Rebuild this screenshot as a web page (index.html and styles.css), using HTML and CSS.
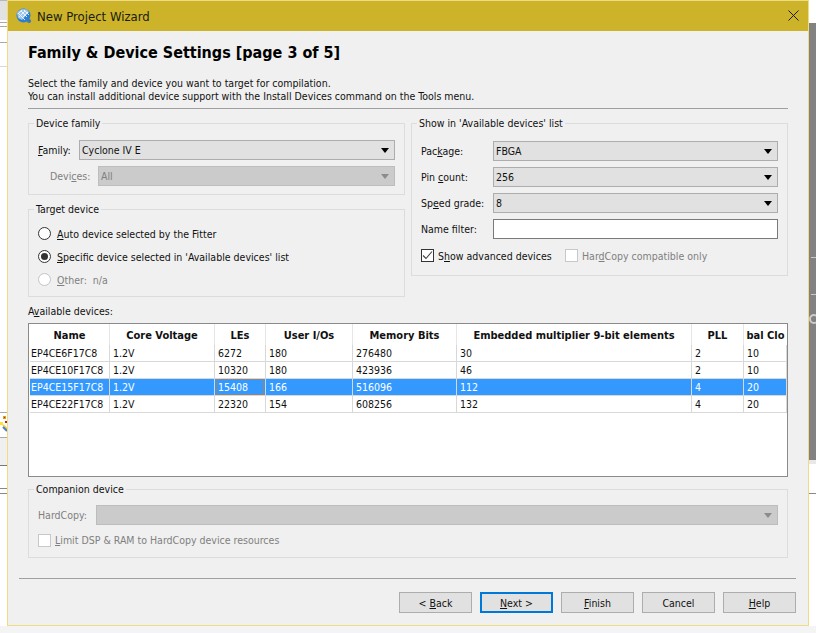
FILE: index.html
```html
<!DOCTYPE html>
<html lang="en">
<head>
<meta charset="utf-8">
<title>New Project Wizard</title>
<link rel="stylesheet" href="styles.css">
</head>
<body>
<div class="desktop">
  <div class="bg-left">
    <i class="s s1"></i><i class="s s2"></i><i class="s s3"></i><i class="s s4"></i><i class="s s5"></i><i class="s s6"></i><i class="s s7"></i><i class="s s8"></i>
    <svg class="wand" width="7" height="18" viewBox="0 0 7 18"><rect x="3" y="1" width="3" height="3" fill="#d9a020"/><rect x="4" y="2" width="1" height="1" fill="#c02020"/><rect x="0" y="7" width="3" height="3" fill="#ffe040"/><path d="M3 10l4 4" stroke="#f0d040" stroke-width="2"/><path d="M3 12l4 4" stroke="#4a7fd0" stroke-width="2"/><rect x="5" y="6" width="2" height="2" fill="#c02020"/></svg>
  </div>
  <div class="bg-right">
    <div class="gray"><span class="g1"></span><span class="g2"></span><span class="g3"></span></div>
    <i class="r1"></i>
  </div>
  <div class="window">
    <div class="titlebar">
      <svg class="appicon" width="16" height="16" viewBox="0 0 16 16"><circle cx="7.500" cy="7.500" r="7" fill="#2f7fd0"/><path d="M1 5C3 1.500 7 0 11 1.500L13 4 6 12 2 10z" fill="#9cc6ee"/><path d="M5 3l6 6M3 6l6 6M8 2l5 5M9 3l-6 6M12 4l-6 6M6 2L2 6" stroke="#f0f6fc" stroke-width=".9"/><circle cx="13" cy="13" r="2" fill="#3a78b8"/></svg>
      <span class="title">New Project Wizard</span>
      <svg class="close" width="11" height="11" viewBox="0 0 11 11"><path d="M.5.500l10 10M10.500.500l-10 10" stroke="#1a1a1a" stroke-width="1"/></svg>
    </div>
    <div class="body">
      <h1>Family &amp; Device Settings [page 3 of 5]</h1>
      <p class="desc">Select the family and device you want to target for compilation.<br>You can install additional device support with the Install Devices command on the Tools menu.</p>
      <hr class="rule">
      <div class="groups">
        <div class="col">
          <fieldset class="fs fs-family">
            <legend>Device family</legend>
            <div class="row"><label class="lbl-family"><u>F</u>amily:</label><div class="combo"><span>Cyclone IV E</span><b class="arrow"></b></div></div>
            <div class="row row-dev"><label class="lbl-dev dim">Devi<u>c</u>es:</label><div class="combo off"><span>All</span><b class="arrow"></b></div></div>
          </fieldset>
          <fieldset class="fs fs-target">
            <legend>Target device</legend>
            <div class="radio-row"><i class="radio"></i><span><u>A</u>uto device selected by the Fitter</span></div>
            <div class="radio-row"><i class="radio on"></i><span><u>S</u>pecific device selected in 'Available devices' list</span></div>
            <div class="radio-row dim"><i class="radio off"></i><span><u>O</u>ther:&nbsp; n/a</span></div>
          </fieldset>
        </div>
        <fieldset class="fs fs-show">
          <legend>Show in 'Available devices' list</legend>
          <div class="row"><label class="lbl-show">Pac<u>k</u>age:</label><div class="combo"><span>FBGA</span><b class="arrow"></b></div></div>
          <div class="row"><label class="lbl-show">Pin <u>c</u>ount:</label><div class="combo"><span>256</span><b class="arrow"></b></div></div>
          <div class="row"><label class="lbl-show">Sp<u>e</u>ed grade:</label><div class="combo"><span>8</span><b class="arrow"></b></div></div>
          <div class="row"><label class="lbl-show">Name filter:</label><div class="input"></div></div>
          <div class="checks">
            <i class="check"><svg width="11" height="11" viewBox="0 0 11 11"><path d="M1 5.500l3 3 6-7" fill="none" stroke="#444" stroke-width="1.100"/></svg></i><span class="c1">S<u>h</u>ow advanced devices</span>
            <i class="check off"></i><span class="dim">Har<u>d</u>Copy compatible only</span>
          </div>
        </fieldset>
      </div>
      <div class="avail">A<u>v</u>ailable devices:</div>
      <div class="tablebox">
        <table>
          <colgroup><col class="c-name"><col class="c-core"><col class="c-les"><col class="c-io"><col class="c-mem"><col class="c-emb"><col class="c-pll"><col class="c-clk"></colgroup>
          <thead><tr><th>Name</th><th>Core Voltage</th><th>LEs</th><th>User I/Os</th><th>Memory Bits</th><th>Embedded multiplier 9-bit elements</th><th>PLL</th><th class="clip">bal Clo</th></tr></thead>
          <tbody>
            <tr><td>EP4CE6F17C8</td><td>1.2V</td><td>6272</td><td>180</td><td>276480</td><td>30</td><td>2</td><td>10</td></tr>
            <tr><td>EP4CE10F17C8</td><td>1.2V</td><td>10320</td><td>180</td><td>423936</td><td>46</td><td>2</td><td>10</td></tr>
            <tr class="sel"><td>EP4CE15F17C8</td><td>1.2V</td><td class="focus">15408</td><td>166</td><td>516096</td><td>112</td><td>4</td><td>20</td></tr>
            <tr><td>EP4CE22F17C8</td><td>1.2V</td><td>22320</td><td>154</td><td>608256</td><td>132</td><td>4</td><td>20</td></tr>
          </tbody>
        </table>
      </div>
      <fieldset class="fs fs-comp">
        <legend>Companion device</legend>
        <div class="row"><label class="lbl-hc dim">HardCopy:</label><div class="combo off"><span></span><b class="arrow"></b></div></div>
        <div class="limit dim"><i class="check off"></i><span><u>L</u>imit DSP &amp; RAM to HardCopy device resources</span></div>
      </fieldset>
    </div>
    <hr class="rule2">
    <div class="buttons">
      <div class="btn"><span>&lt; <u>B</u>ack</span></div>
      <div class="btn def"><span><u>N</u>ext &gt;</span></div>
      <div class="btn"><span><u>F</u>inish</span></div>
      <div class="btn"><span>Cancel</span></div>
      <div class="btn"><span><u>H</u>elp</span></div>
    </div>
  </div>
</div>
</body>
</html>
```
FILE: styles.css
```css
* { box-sizing: border-box; }
html, body { margin: 0; padding: 0; }
body { width: 816px; height: 633px; overflow: hidden; background: #fff; font-family: "DejaVu Sans Condensed", "DejaVu Sans", sans-serif; font-stretch: condensed; font-size: 10.500px; color: #111; }
.desktop { position: relative; width: 816px; height: 633px; background: #fff; overflow: hidden; }
.desktop::after { content: ""; position: absolute; left: 0; right: 0; top: 626px; bottom: 0; background: #f4f4f4; }
u { text-decoration-thickness: 1px; text-underline-offset: 1px; }

.bg-left { position: absolute; left: 0; top: 0; width: 7px; height: 626px; }
.s { position: absolute; left: 0; width: 7px; display: block; }
.s1 { top: 0; height: 20px; background: #e2e2e2; border-top: 1px solid #b8b8b8; }
.s2 { top: 22px; height: 1px; background: #aaa; }
.s3 { top: 26px; height: 1px; background: #aaa; }
.s4 { top: 42px; height: 1px; background: #aaa; }
.s5 { top: 66px; height: 1px; background: #d8d8d8; }
.s6 { top: 412px; height: 1px; background: #aaa; }
.s7 { top: 437px; height: 29px; background: #f0f0f0; border-top: 1px solid #aaa; border-bottom: 1px solid #777; }
.s8 { top: 488px; height: 6px; border-top: 1px solid #888; border-bottom: 1px solid #888; }
.wand { position: absolute; left: 0; top: 415px; }

.bg-right { position: absolute; left: 809px; top: 0; width: 7px; height: 626px; background: #fff; }
.gray { position: absolute; left: 0; top: 23px; width: 7px; height: 441px; background: #828282; border-bottom: 4px solid #e8e8e8; overflow: hidden; }
.g1, .g2 { position: absolute; left: 2px; width: 5px; height: 1px; background: #c8c8c8; }
.g1 { top: 234px; }
.g2 { top: 271px; }
.g3 { position: absolute; left: 0; top: 291px; width: 10px; height: 10px; border: 2px solid #ccc; border-radius: 50%; }
.r1 { position: absolute; left: 0; top: 493px; width: 7px; height: 1px; background: #888; display: block; }

.window { position: absolute; left: 7px; top: 0; width: 802px; height: 626px; background: #f0f0f0; border: 1px solid #f0dc80; display: flex; flex-direction: column; }
.titlebar { height: 30px; flex: none; background: #ccb32a; display: flex; align-items: center; padding: 0 9px 0 8px; }
.appicon { flex: none; }
.title { margin-left: 5px; font-size: 13px; flex: 1; color: #1c1c10; }
.close { flex: none; margin-bottom: 1px; }

.body { padding: 0 20px; flex: 1; display: flex; flex-direction: column; }
h1 { margin: 11px 0 0; height: 22px; line-height: 22px; font-size: 16px; font-weight: bold; color: #000; white-space: nowrap; }
.desc { margin: 13px 0 0; line-height: 13px; white-space: nowrap; }
.rule { margin: 5px 0 0; border: 0; height: 1px; background: #a0a0a0; flex: none; }

.groups { display: grid; grid-template-columns: 377px 377px; column-gap: 6px; margin-top: 8px; height: 180px; }
.col { display: flex; flex-direction: column; }
.fs { margin: 0; padding: 0; border: 1px solid #dcdcdc; min-width: 0; }
.fs legend { margin-left: -4px; padding: 0 2px; height: 13px; line-height: 13px; white-space: nowrap; }
.fs-family { height: 78px; padding: 10px 9px 0; }
.fs-target { height: 94px; margin-top: 8px; padding: 6px 9px 0; flex: none; }
.fs-show { height: 159px; padding: 11px 9px 0; }
.row { display: flex; align-items: center; height: 20px; margin-bottom: 6px; }
.row-dev { margin-bottom: 0; }
.lbl-family { width: 41px; flex: none; }
.lbl-dev { width: 60px; flex: none; padding-left: 12px; }
.lbl-show { width: 72px; flex: none; }
.lbl-hc { width: 58px; flex: none; }
.dim { color: #808080; }
.combo { flex: 1; height: 20px; background: #e1e1e1; border: 1px solid #adadad; display: flex; align-items: center; padding: 0 5px 0 2px; min-width: 0; }
.combo span { flex: 1; }
.arrow { width: 0; height: 0; border-left: 4px solid transparent; border-right: 4px solid transparent; border-top: 5px solid #000; margin-right: 0; }
.combo.off { background: #cbcbcb; border-color: #bdbdbd; color: #808080; }
.combo.off .arrow { border-top-color: #8c8c8c; }
.input { flex: 1; height: 20px; background: #fff; border: 1px solid #7a7a7a; }

.radio-row { display: flex; align-items: center; height: 23px; }
.radio { width: 13px; height: 13px; border-radius: 50%; border: 1px solid #333; background: #fff; margin-right: 6px; flex: none; display: block; position: relative; }
.radio.on::after { content: ""; position: absolute; left: 2px; top: 2px; width: 7px; height: 7px; border-radius: 50%; background: #333; }
.radio.off { border-color: #c4c4c4; }
.checks { display: flex; align-items: center; height: 13px; margin-top: 10px; }
.check { width: 13px; height: 13px; border: 1px solid #333; background: #fff; flex: none; display: flex; align-items: center; justify-content: center; }
.check.off { border-color: #c8c8c8; }
.c1 { margin-left: 4px; width: 127px; flex: none; }
.checks .dim { margin-left: 4px; }

.avail { margin-top: 8px; height: 13px; line-height: 13px; }
.tablebox { margin-top: 5px; height: 154px; background: #fff; border: 1px solid #8a8a8a; padding-left: 1px; overflow: hidden; flex: none; }
table { border-collapse: separate; border-spacing: 0; table-layout: fixed; width: 757px; }
.c-name { width: 80px; } .c-core { width: 105px; } .c-les { width: 51px; } .c-io { width: 87px; }
.c-mem { width: 104px; } .c-emb { width: 235px; } .c-pll { width: 52px; } .c-clk { width: 43px; }
th { height: 21px; padding: 2px 0 0; font-size: 11px; font-weight: bold; text-align: center; border-right: 1px solid #e6e6e6; white-space: nowrap; overflow: hidden; color: #111; }
.clip { border-right: 0; }
td { height: 17px; padding: 0 0 0 3px; border-right: 1px solid #d8d8d8; border-bottom: 1px solid #d8d8d8; white-space: nowrap; overflow: hidden; }
td:first-child { padding-left: 1px; }
.sel td { background: #3399ff; color: #fff; }
.sel td.focus {
  background-color: #3399ff;
  background-image:
    repeating-linear-gradient(90deg, #d9771a 0 1px, transparent 1px 2px),
    repeating-linear-gradient(90deg, #d9771a 0 1px, transparent 1px 2px),
    repeating-linear-gradient(0deg, #d9771a 0 1px, transparent 1px 2px),
    repeating-linear-gradient(0deg, #d9771a 0 1px, transparent 1px 2px);
  background-size: 48px 1px, 48px 1px, 1px 16px, 1px 16px;
  background-position: 1px 0, 1px 15px, 1px 0, 48px 0;
  background-repeat: no-repeat;
}

.fs-comp { height: 75px; margin-top: 6px; padding: 9px 9px 0; flex: none; }
.fs-comp .row { margin-bottom: 8px; }
.limit { display: flex; align-items: center; height: 14px; }
.limit span { margin-left: 4px; }

.rule2 { margin: 20px 12px 0 11px; height: 1px; border: 0; background: #a0a0a0; flex: none; }
.buttons { flex: none; height: 46px; display: flex; justify-content: flex-end; gap: 8px; padding: 13px 12px 0 0; }
.btn { width: 73px; height: 21px; background: #e1e1e1; border: 1px solid #adadad; display: flex; align-items: center; justify-content: center; }
.btn.def { border: 2px solid #0078d7; }
```
